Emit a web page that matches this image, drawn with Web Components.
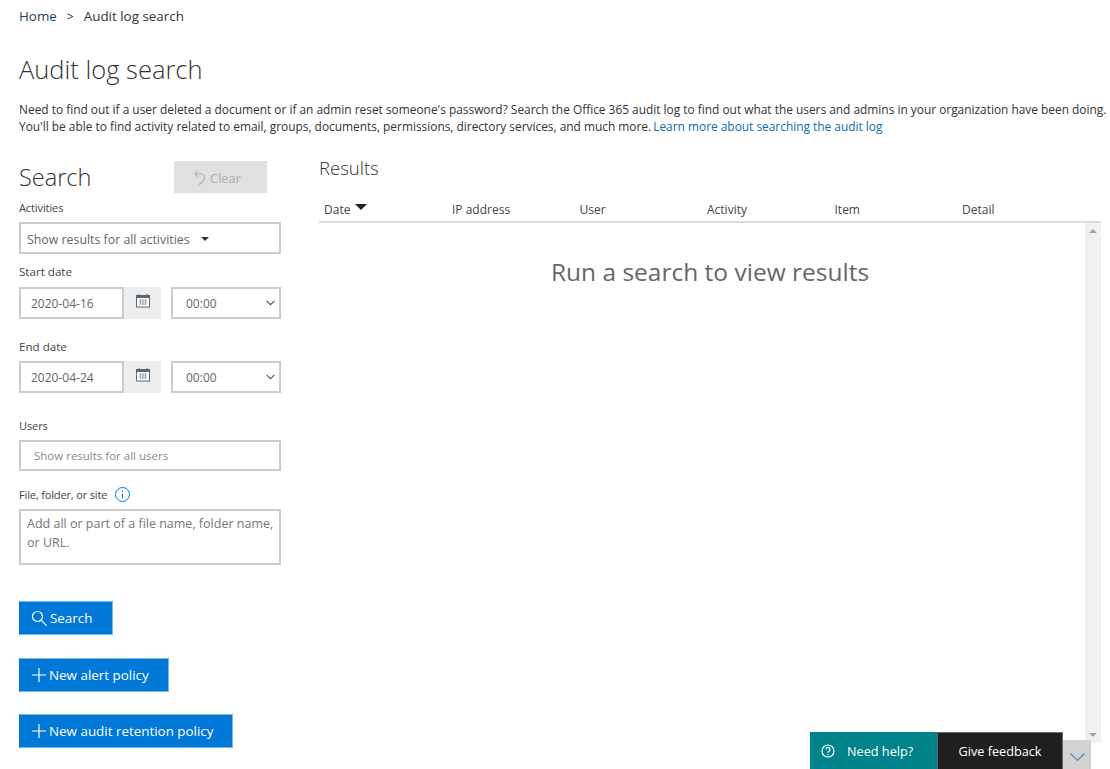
<!DOCTYPE html>
<html lang="en">
<head>
<meta charset="utf-8">
<title>Audit log search</title>
<style>
    html, body { margin: 0; height: 769px; overflow: hidden; background: #fff; }
    body { font-family: "Open Sans", "Liberation Sans", sans-serif; color: #333; position: relative; }
</style>
</head>
<body>
<audit-page>
    <audit-breadcrumb slot="top" current="Audit log search">Home</audit-breadcrumb>
    <audit-intro slot="top" heading="Audit log search">
        Need to find out if a user deleted a document or if an admin reset someone's password? Search the Office 365 audit log to find out what the users and admins in your organization have been doing.<br>
        You'll be able to find activity related to email, groups, documents, permissions, directory services, and much more. <a href="#">Learn more about searching the audit log</a>
    </audit-intro>
    <search-panel slot="left"></search-panel>
    <results-panel slot="right"></results-panel>
</audit-page>
<help-bar></help-bar>

<script>
const ICONS = {
    search: '<svg width="17" height="17" viewBox="0 0 17 17" fill="none" stroke="currentColor" stroke-width="1.2"><circle cx="6.5" cy="6.5" r="5"/><path d="M10.2 10.2l5.6 5.6"/></svg>',
    plus: '<svg width="16" height="16" viewBox="0 0 16 16" fill="none" stroke="currentColor" stroke-width="1.2"><path d="M8 1v14M1 8h14"/></svg>',
    calendar: '<svg width="14" height="14" viewBox="0 0 14 14" fill="none"><rect x=".5" y="1.5" width="13" height="11.5" fill="#fff" stroke="#5a6a75"/><rect x="0" y="1" width="14" height="3" fill="#5a6a75"/><path d="M3 0v2M11 0v2" stroke="#5a6a75"/><path d="M3 6h8M3 8h8M3 10h8M4.5 5.5v5.5M7 5.5v5.5M9.5 5.5v5.5" stroke="#8c98a0" stroke-width=".7"/></svg>',
    chevron: '<svg width="9" height="6" viewBox="0 0 9 6" fill="none" stroke="#555" stroke-width="1.1"><path d="M.6.8L4.5 4.7 8.4.8"/></svg>'
};

class AuditPage extends HTMLElement {
    constructor(){
        super();
        this.attachShadow({ mode: 'open' });
        this.shadowRoot.innerHTML = `
            <style>
                :host { display: block; padding-left: 19px; }
                .columns { display: grid; grid-template-columns: 262px 782px; column-gap: 38px; margin-top: 25px; }
            </style>
            <slot name="top"></slot>
            <div class="columns">
                <slot name="left"></slot>
                <slot name="right"></slot>
            </div>
        `;
    }
}

class AuditBreadcrumb extends HTMLElement {
    constructor(){
        super();
        this.attachShadow({ mode: 'open' });
        this.shadowRoot.innerHTML = `
            <style>
                :host { display: flex; height: 32px; align-items: center; font-size: 13.4px; color: #333; }
                .home { color: #24405c; }
                .sep { margin: 0 10px 0 10px; font-size: 12px; }
            </style>
            <span class="home"><slot></slot></span><span class="sep">&gt;</span><span id="current"></span>
        `;
    }

    connectedCallback(){
        this.shadowRoot.querySelector('#current').textContent = this.getAttribute('current');
    }
}

class AuditIntro extends HTMLElement {
    constructor(){
        super();
        this.attachShadow({ mode: 'open' });
        this.shadowRoot.innerHTML = `
            <style>
                :host { display: block; }
                h1 { margin: 19px 0 0; height: 36px; line-height: 36px; font-size: 25.5px; font-weight: 300; color: #333; }
                p { margin: 14px 0 0; font-size: 11.9px; line-height: 17px; font-weight: 500; color: #333; white-space: nowrap; }
                ::slotted(a) { color: #0f6cab; text-decoration: none; font-weight: 500; margin-left: -1px; }
            </style>
            <h1></h1>
            <p><slot></slot></p>
        `;
    }

    connectedCallback(){
        this.shadowRoot.querySelector('h1').textContent = this.getAttribute('heading');
    }
}

class ActionButton extends HTMLElement {
    constructor(){
        super();
        this.attachShadow({ mode: 'open' });
        this.shadowRoot.innerHTML = `
            <style>
                :host { display: block; width: fit-content; height: 34px; box-sizing: border-box; background: #0078d7; color: #fff; border: 1px solid #7ab8ea; border-left-color: #0078d7; padding: 0 19px 0 11px; font-size: 13.4px; }
                .inner { display: flex; align-items: center; height: 100%; gap: 2px; }
                span { display: flex; }
            </style>
            <div class="inner"><span id="icon"></span><slot></slot></div>
        `;
    }

    connectedCallback(){
        this.shadowRoot.querySelector('#icon').innerHTML = ICONS[this.getAttribute('icon')];
    }
}

class SearchPanel extends HTMLElement {
    constructor(){
        super();
        this.attachShadow({ mode: 'open' });
        this.shadowRoot.innerHTML = `
            <style>
                :host { display: block; font-size: 12px; color: #444; }
                .head { display: flex; height: 33px; align-items: flex-end; }
                h2 { margin: 0; align-self: flex-start; font-size: 23.5px; font-weight: 300; line-height: 35px; color: #333; width: 155px; }
                .clear { width: 93px; height: 32px; box-sizing: border-box; padding: 1px 6px 0 0; background: #e0e0e0; color: #aeaeae; display: flex; align-items: center; justify-content: center; gap: 4px; font-size: 12.8px; }
                label { display: block; font-size: 11px; letter-spacing: -.1px; line-height: 16px; color: #444; }
                label.date-label { font-size: 11.6px; letter-spacing: 0; }
                .box { box-sizing: border-box; border: 2px solid #ccc; height: 32px; display: flex; align-items: center; color: #666; }
                .row { display: flex; }
                .date { width: 105px; padding-left: 10px; }
                .cal { width: 37px; height: 32px; background: #eee; display: flex; align-items: center; justify-content: center; padding-bottom: 4px; box-sizing: border-box; }
                .time { width: 110px; margin-left: 10px; padding: 0 4px 0 13px; justify-content: space-between; }
                .arrow { width: 0; height: 0; border: 4px solid transparent; border-top: 4px solid #333; border-bottom: 0; margin-left: 11px; }
                .placeholder { color: #8a8a8a; font-size: 11.5px; padding-left: 13px; }
                .area { display: block; height: 56px; padding: 3px 0 4px 6px; font-size: 12.5px; line-height: 19px; color: #777; }
                .info { display: inline-block; vertical-align: -3px; margin-left: 5px; }
                .btns { display: flex; flex-direction: column; }
            </style>
            <div class="head">
                <h2>Search</h2>
                <div class="clear">
                    <svg width="12" height="16" viewBox="0 0 12 16" fill="none" stroke="#b4b4b4" stroke-width="1.1"><path d="M1 4h6a3.800 3.800 0 0 1 2.500 6.500L5 15M3.800 1.200L1 4l2.800 2.800"/></svg>
                    Clear
                </div>
            </div>
            <label style="margin-top:7px">Activities</label>
            <div class="box" style="margin-top:6px;padding:2px 0 0 6px;font-size:12.35px">Show results for all activities<span class="arrow"></span></div>

            <label class="date-label" style="margin-top:10px">Start date</label>
            <div class="row" style="margin-top:7px">
                <div class="box date">2020-04-16</div><div class="cal">${ICONS.calendar}</div>
                <div class="box time">00:00${ICONS.chevron}</div>
            </div>

            <label class="date-label" style="margin-top:20px">End date</label>
            <div class="row" style="margin-top:6px">
                <div class="box date">2020-04-24</div><div class="cal">${ICONS.calendar}</div>
                <div class="box time">00:00${ICONS.chevron}</div>
            </div>

            <label style="margin-top:25px">Users</label>
            <div class="box placeholder" style="margin-top:6px;height:31px">Show results for all users</div>

            <label style="margin-top:16px;letter-spacing:-.15px">File, folder, or site
                <svg class="info" width="15" height="15" viewBox="0 0 15 15" fill="none" stroke="#0078d7"><circle cx="7.5" cy="7.5" r="7"/><path d="M7.5 6.500v5M7.500 3.500v1.500"/></svg>
            </label>
            <div class="box area" style="margin-top:6px">Add all or part of a file name, folder name, or URL.</div>

            <div class="btns">
                <action-button icon="search" style="margin-top:36px;padding-right:20px">Search</action-button>
                <action-button icon="plus" style="margin-top:23px">New alert policy</action-button>
                <action-button icon="plus" style="margin-top:22px">New audit retention policy</action-button>
            </div>
        `;
    }
}

class ResultsPanel extends HTMLElement {
    constructor(){
        super();
        this.attachShadow({ mode: 'open' });
        const cols = ['IP address', 'User', 'Activity', 'Item', 'Detail'];
        this.shadowRoot.innerHTML = `
            <style>
                :host { display: block; font-size: 12px; color: #444; }
                h2 { margin: 0; font-size: 18.5px; font-weight: 300; line-height: 26px; color: #333; position: relative; top: -5px; }
                .header { display: grid; grid-template-columns: 128px repeat(5, 127.5px); height: 24px; align-items: center; border-bottom: 2px solid #ddd; margin-top: 11px; padding-left: 5px; }
                .date { display: flex; align-items: center; gap: 5px; }
                .sort { width: 0; height: 0; border: 6.5px solid transparent; border-top: 6px solid #222; border-bottom: 0; margin-top: -4px; }
                .body { position: relative; height: 520px; }
                .empty { text-align: center; font-size: 24.5px; color: #666; padding-top: 31px; line-height: 36px; }
                .track { position: absolute; top: 0; right: 0; bottom: 0; width: 16px; background: #f1f1f1; }
                .up, .down { position: absolute; left: 4px; width: 0; height: 0; border: 4px solid transparent; }
                .up { top: 6px; border-bottom: 4px solid #a3a3a3; border-top: 0; }
                .down { bottom: 6px; border-top: 4px solid #a3a3a3; border-bottom: 0; }
            </style>
            <h2>Results</h2>
            <div class="header">
                <div class="date">Date<span class="sort"></span></div>
                ${cols.map(c => `<div>${c}</div>`).join('')}
            </div>
            <div class="body">
                <div class="empty">Run a search to view results</div>
                <div class="track"><span class="up"></span><span class="down"></span></div>
            </div>
        `;
    }
}

class HelpBar extends HTMLElement {
    constructor(){
        super();
        this.attachShadow({ mode: 'open' });
        this.shadowRoot.innerHTML = `
            <style>
                :host { position: absolute; left: 810px; top: 732px; display: flex; align-items: flex-end; height: 37px; font-size: 12.7px; color: #fff; }
                .help { width: 127px; height: 37px; background: #00838a; display: flex; align-items: center; padding-left: 11px; box-sizing: border-box; gap: 12px; }
                .feedback { width: 126px; height: 37px; box-sizing: border-box; background: #201f1f; border: 1px solid #6a6a6a; border-bottom: 0; display: flex; align-items: center; justify-content: center; }
                .toggle { width: 28px; height: 29px; background: #d2d2d2; display: flex; align-items: center; justify-content: center; padding-top: 4px; box-sizing: border-box; }
            </style>
            <div class="help">
                <svg width="14" height="14" viewBox="0 0 14 14" fill="none" stroke="#fff" stroke-width="1.2"><circle cx="7" cy="7" r="6"/><path d="M5 5.500a2 2 0 1 1 3 1.700c-.7.400-1 .8-1 1.500M7 10v1.200"/></svg>
                <span>Need help?</span>
            </div>
            <div class="feedback">Give feedback</div>
            <div class="toggle"><svg width="15" height="8" viewBox="0 0 15 8" fill="none" stroke="#3f87d0" stroke-width="1.1"><path d="M.5.500L7.500 7.300 14.500.500"/></svg></div>
        `;
    }
}

customElements.define('audit-page', AuditPage);
customElements.define('audit-breadcrumb', AuditBreadcrumb);
customElements.define('audit-intro', AuditIntro);
customElements.define('action-button', ActionButton);
customElements.define('search-panel', SearchPanel);
customElements.define('results-panel', ResultsPanel);
customElements.define('help-bar', HelpBar);
</script>
</body>
</html>
